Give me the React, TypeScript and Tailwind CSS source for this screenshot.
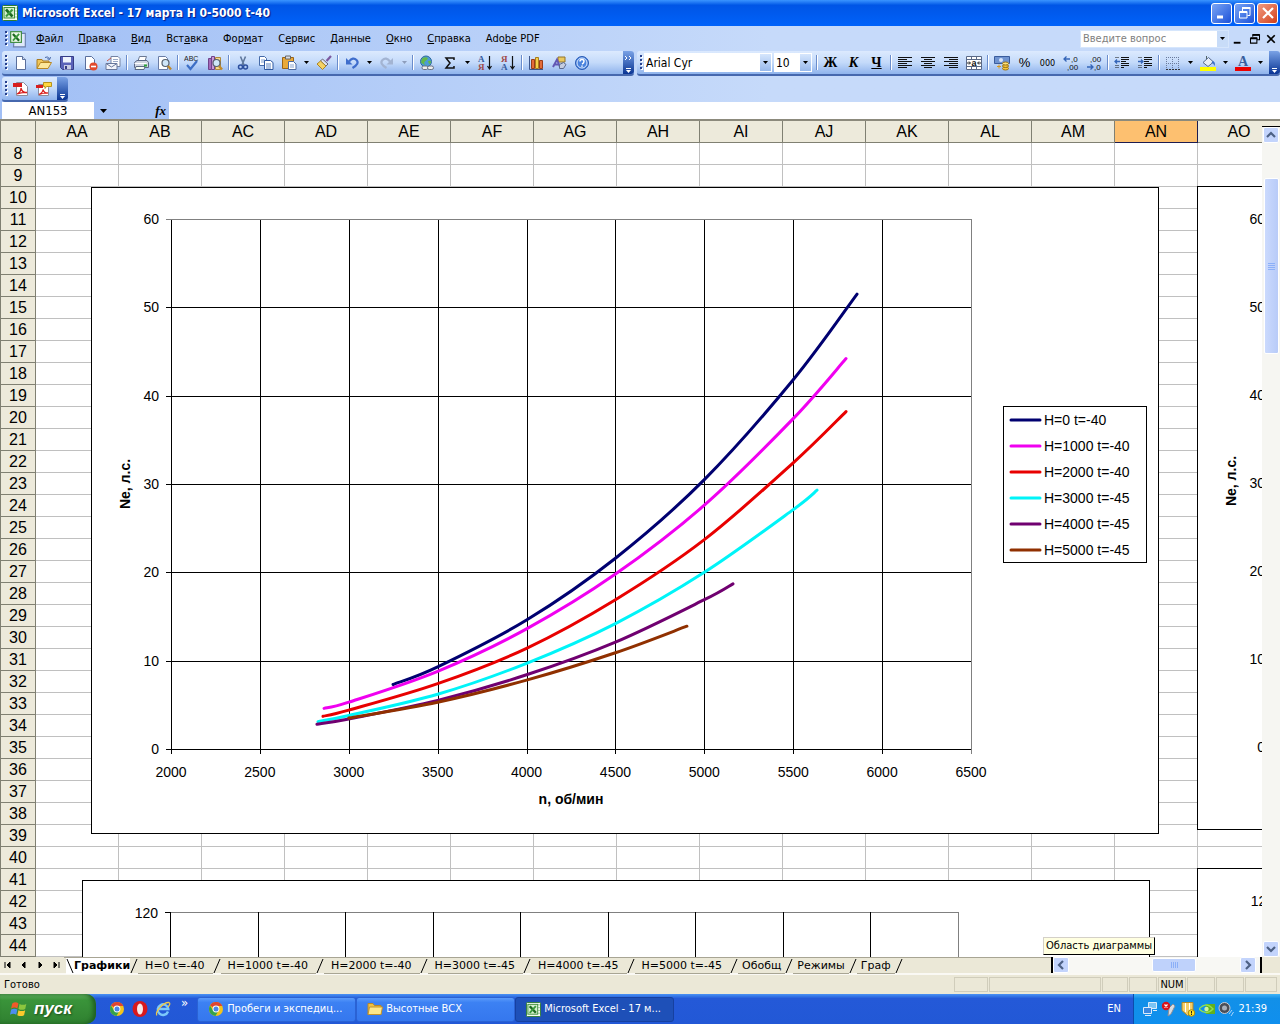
import type { ReactNode } from "react";
import clsx from "clsx";

type Point = [number, number];

interface Series {
  label: string;
  color: string;
  points: Point[];
}

const SERIES: Series[] = [
  {
    label: "H=0 t=-40",
    color: "#000070",
    points: [[3249, 7.3], [3500, 9.3], [4000, 14.6], [4500, 21.6], [5000, 30.5], [5500, 41.8], [5859, 51.5]],
  },
  {
    label: "H=1000 t=-40",
    color: "#f000f0",
    points: [[2861, 4.6], [3000, 5.3], [3500, 8.8], [4000, 13.6], [4500, 19.8], [5000, 27.6], [5500, 37.4], [5797, 44.2]],
  },
  {
    label: "H=2000 t=-40",
    color: "#e80000",
    points: [[2855, 3.7], [3000, 4.4], [3500, 7.4], [4000, 11.4], [4500, 16.9], [5000, 23.7], [5500, 32.4], [5797, 38.2]],
  },
  {
    label: "H=3000 t=-45",
    color: "#00f4f8",
    points: [[2827, 3.1], [3000, 3.8], [3500, 6.2], [4000, 9.7], [4500, 14.2], [5000, 20], [5500, 27.1], [5634, 29.3]],
  },
  {
    label: "H=4000 t=-45",
    color: "#700070",
    points: [[2821, 2.8], [3000, 3.4], [3500, 5.5], [4000, 8.4], [4500, 12.1], [5000, 16.9], [5161, 18.7]],
  },
  {
    label: "H=5000 t=-45",
    color: "#903000",
    points: [[3000, 3.5], [3500, 5.3], [4000, 7.8], [4500, 10.9], [4902, 13.9]],
  },
];

const COLUMNS = ["AA", "AB", "AC", "AD", "AE", "AF", "AG", "AH", "AI", "AJ", "AK", "AL", "AM", "AN", "AO"];
const ROWS = Array.from({ length: 37 }, (_, i) => i + 8);

const MENU: [string, string, string][] = [
  ["", "Ф", "айл"],
  ["", "П", "равка"],
  ["", "В", "ид"],
  ["Вст", "а", "вка"],
  ["Фор", "м", "ат"],
  ["С", "е", "рвис"],
  ["", "Д", "анные"],
  ["", "О", "кно"],
  ["", "С", "правка"],
  ["Ado", "b", "e PDF"],
];

const SHEETS = ["H=0 t=-40", "H=1000 t=-40", "H=2000 t=-40", "H=3000 t=-45", "H=4000 t=-45", "H=5000 t=-45", "Обобщ", "Режимы", "Граф"];

/* ---------- icons ---------- */

function Svg({ children, size = 16 }: { children: ReactNode; size?: number }) {
  return (
    <svg width={size} height={size} viewBox="0 0 16 16" fill="none" className="shrink-0" aria-hidden="true">
      {children}
    </svg>
  );
}

function ExcelIcon({ size = 16 }: { size?: number }) {
  return (
    <Svg size={size}>
      <rect x="0.5" y="0.5" width="15" height="15" rx="1" fill="#f4fbf0" stroke="#2f7d32" />
      <path d="M10 3h5M10 6h5M10 9h5M10 12h5" stroke="#9cc79a" />
      <rect x="2" y="2.5" width="10.500" height="10.500" fill="#d5efce" stroke="#3e8f3c" />
      <path d="M4 4.500l6.500 7" stroke="#1d6b22" strokeWidth="2.600" />
      <path d="M10.500 4.500l-6.500 7" stroke="#3c9a3e" strokeWidth="2" />
    </Svg>
  );
}

function ChromeIcon() {
  return (
    <Svg>
      <circle cx="8" cy="8" r="7" fill="#f4c41c" />
      <path d="M8 8L2 4.400A7 7 0 0 1 14.300 5H8z" fill="#df4430" />
      <path d="M2 4.400A7 7 0 0 0 7.500 15L10.500 9.500 5 9.500z" fill="#36a24c" />
      <circle cx="8" cy="8" r="3.400" fill="#fff" />
      <circle cx="8" cy="8" r="2.500" fill="#4a86e8" />
    </Svg>
  );
}

const page = <path d="M3.500 1.500h6l3 3v10h-9z" fill="#fff" stroke="#5a6f9c" />;
const lens = (
  <>
    <circle cx="9.500" cy="8" r="3.500" fill="#cfe6f8" stroke="#55606e" strokeWidth="1.200" />
    <path d="M12 11l3 3.500" stroke="#c08a2c" strokeWidth="2.400" />
  </>
);

const ICONS: Record<string, ReactNode> = {
  new: (
    <>
      {page}
      <path d="M9.500 1.500v3h3" fill="#c9d7ef" stroke="#5a6f9c" />
    </>
  ),
  open: (
    <>
      <path d="M1 13.500V4.500h5l1 1.500h6v3" fill="#f1c75b" stroke="#a87a20" />
      <path d="M1 13.500L4.500 7.500h11L12 13.500z" fill="#fde79b" stroke="#b88724" />
      <path d="M9 2.500q3-2 4.500 1.500M14.500 2l-.8 2.500-2.500-.8" stroke="#4b6aa8" />
    </>
  ),
  save: (
    <>
      <path d="M1.500 1.500h13v13h-11l-2-2z" fill="#5a62b8" stroke="#363c86" />
      <path d="M4 2h8v5.500H4z" fill="#eef3fd" />
      <path d="M5 10h7v4.500H5z" fill="#c8cce4" />
      <path d="M6 11h2v3H6z" fill="#363c86" />
    </>
  ),
  permission: (
    <>
      {page}
      <circle cx="11.500" cy="11.500" r="4" fill="#e2492c" />
      <path d="M9 11.500h5" stroke="#fff" strokeWidth="1.600" />
    </>
  ),
  mail: (
    <>
      <path d="M6 1.500h7l2 2v8H6z" fill="#fff" stroke="#7583a3" />
      <path d="M8 4.500h5M8 6.500h5" stroke="#9aa9c8" />
      <path d="M1 8.500h11v6H1z" fill="#f2f4fa" stroke="#68789c" />
      <path d="M1 8.500l5.500 3.500L12 8.500" stroke="#68789c" />
      <path d="M2 6l4-3" stroke="#cc5544" />
    </>
  ),
  print: (
    <>
      <path d="M5 6l1.500-4.500h7L12 6z" fill="#fff" stroke="#6c7a94" />
      <path d="M1.500 7.500L4 5.500h10l1.500 2v5h-14z" fill="#cfd6e2" stroke="#5c6984" />
      <path d="M1.500 8.500h12" stroke="#fff" />
      <path d="M3 11.500h9l-1 3H2z" fill="#f6fff4" stroke="#5c6984" />
      <path d="M11 10.500h3" stroke="#2ca53a" strokeWidth="2" />
    </>
  ),
  preview: (
    <>
      <path d="M2.500 1.500h7l2 2v11h-9z" fill="#fff" stroke="#6a7da6" />
      {lens}
    </>
  ),
  spell: (
    <>
      <text x="0" y="6" fontSize="7" fill="#222" fontFamily="Liberation Sans, sans-serif">ABC</text>
      <path d="M3 10l3.500 4L13 6" stroke="#3d6fc6" strokeWidth="2.200" />
    </>
  ),
  research: (
    <>
      <path d="M1.500 3.500h3v11h-3z" fill="#a46ab8" stroke="#70428a" />
      <path d="M4.500 1.500h3v13h-3z" fill="#c99ad8" stroke="#70428a" />
      <path d="M8.500 2.500h5v12h-5z" fill="#f3d890" stroke="#b08a3c" />
      {lens}
    </>
  ),
  cut: (
    <>
      <path d="M5.500 1.500L9 10M10.500 1.500L7 10" stroke="#60789c" strokeWidth="1.600" />
      <circle cx="5.500" cy="12" r="2" stroke="#2c4f9e" strokeWidth="1.500" />
      <circle cx="10.500" cy="12" r="2" stroke="#2c4f9e" strokeWidth="1.500" />
    </>
  ),
  copy: (
    <>
      <path d="M1.500 1.500h5l2 2v7h-7z" fill="#fff" stroke="#456aa8" />
      <path d="M3 5h4M3 7h4" stroke="#7f9fd0" />
      <path d="M6.500 5.500h6l2.500 2v7H6.500z" fill="#fff" stroke="#2f58a0" />
      <path d="M8 9h5M8 11h5M8 13h5" stroke="#5f86c4" />
    </>
  ),
  paste: (
    <>
      <path d="M1.500 2.500h11v11h-11z" fill="#e9a93a" stroke="#9a6518" />
      <path d="M4.500 1h5v3h-5z" fill="#d9dce4" stroke="#666" />
      <path d="M7.500 6.500h5l2.500 2.500v5.500H7.500z" fill="#fff" stroke="#4c6aa0" />
      <path d="M9 10h4M9 12h4" stroke="#8aa5d0" />
    </>
  ),
  painter: (
    <>
      <path d="M15 1l-4.500 5" stroke="#7c5aa0" strokeWidth="2.200" />
      <path d="M6.500 4l5.500 5-2 2L4.500 6z" fill="#dfe3ee" stroke="#667" />
      <path d="M4.500 6l5.500 5-3.500 3.500L1 9z" fill="#f5d263" stroke="#ab8426" />
    </>
  ),
  undo: (
    <>
      <path d="M5 6.500Q9 1.500 12.500 5T8.500 13" stroke="#3e6dcc" strokeWidth="2.200" />
      <path d="M2 3v6.500h6.500z" fill="#3e6dcc" />
    </>
  ),
  redo: (
    <>
      <path d="M11 6.500Q7 1.500 3.500 5T7.500 13" stroke="#a3b4d2" strokeWidth="2.200" />
      <path d="M14 3v6.500H7.500z" fill="#a3b4d2" />
    </>
  ),
  link: (
    <>
      <circle cx="7" cy="6.500" r="5.500" fill="#4c9bd8" stroke="#2f6a9c" />
      <path d="M3 3.500q3-2 5-1t-1 3-1 4-4-2z" fill="#64b848" />
      <path d="M9 6q3-1 3 1t-2 2z" fill="#64b848" />
      <rect x="3" y="11" width="6" height="3.500" rx="1.700" fill="#eee" stroke="#6a7284" />
      <rect x="8.500" y="11" width="6" height="3.500" rx="1.700" fill="#eee" stroke="#6a7284" />
    </>
  ),
  sum: <path d="M12 5V3H4l4 5-4 5h8v-2" stroke="#111" strokeWidth="1.500" />,
  chart: (
    <>
      <path d="M1.500 1v13.500H15" stroke="#3d568c" />
      <path d="M3.500 4.500h3v9h-3z" fill="#e36c3a" stroke="#9a3c18" />
      <path d="M7.500 2.500h3v11h-3z" fill="#f6cf4b" stroke="#a97d1b" />
      <path d="M11.500 5.500h3v8h-3z" fill="#e36c3a" stroke="#9a3c18" />
    </>
  ),
  drawing: (
    <>
      <path d="M7 2h7v5H7z" fill="#e9c860" stroke="#93752a" />
      <path d="M2 12L6 4.500 9 12M3.500 9.500h4" stroke="#6257b4" strokeWidth="2" />
      <path d="M8.500 9.500l4-2 2.500 2-2.500 4h-4z" fill="#c5cde0" stroke="#5b6a8e" />
    </>
  ),
  help: (
    <>
      <circle cx="8" cy="8" r="6.500" fill="#4a83de" stroke="#2a5bb4" />
      <circle cx="8" cy="8" r="5" stroke="#dbe8fc" />
      <path d="M6 6.500q0-2 2-2t2 1.800-2 2.700M8 10.500v1.300" stroke="#fff" strokeWidth="1.500" />
    </>
  ),
  left: <path d="M1 2.500h14M1 4.500h9M1 6.500h14M1 8.500h9M1 10.500h14M1 12.500h9" stroke="#111" />,
  center: <path d="M1 2.500h14M4 4.500h8M1 6.500h14M4 8.500h8M1 10.500h14M4 12.500h8" stroke="#111" />,
  right: <path d="M1 2.500h14M6 4.500h9M1 6.500h14M6 8.500h9M1 10.500h14M6 12.500h9" stroke="#111" />,
  merge: (
    <>
      <path d="M.5 1.500h15v13H.5zM.5 4.500h15M.5 11.500h15M5.500 1.500v3M10.500 1.500v3M5.500 11.500v3M10.500 11.500v3" fill="#fff" stroke="#5b6a88" />
      <text x="5.500" y="10.500" fontSize="9" fontWeight="bold" fill="#111" fontFamily="Liberation Sans, sans-serif">a</text>
      <path d="M1 8h3M12 8h3M3 6.500L4.500 8 3 9.500M13 6.500L11.500 8l1.500 1.500" stroke="#222" />
    </>
  ),
  currency: (
    <>
      <path d="M.5 1.500h15v7H.5z" fill="#6f93d0" stroke="#3a5c9c" />
      <circle cx="7" cy="5" r="2" fill="#d6e4fa" />
      <ellipse cx="11.500" cy="13.500" rx="3" ry="1.500" fill="#f4c53c" stroke="#9b7414" />
      <ellipse cx="11.500" cy="11" rx="3" ry="1.500" fill="#f4c53c" stroke="#9b7414" />
      <ellipse cx="11.500" cy="8.500" rx="3" ry="1.500" fill="#fbe07c" stroke="#9b7414" />
      <path d="M3 11.500h4M5 9.500v4" stroke="#d89a20" />
    </>
  ),
  incDecimal: (
    <>
      <text x="8" y="7" fontSize="8" fill="#111" fontFamily="Liberation Sans, sans-serif">,0</text>
      <text x="4" y="15" fontSize="8" fill="#111" fontFamily="Liberation Sans, sans-serif">,00</text>
      <path d="M1 4h6M3.500 1.500L1 4l2.500 2.500" stroke="#3565b8" strokeWidth="1.300" />
    </>
  ),
  decDecimal: (
    <>
      <text x="4" y="7" fontSize="8" fill="#111" fontFamily="Liberation Sans, sans-serif">,00</text>
      <text x="8" y="15" fontSize="8" fill="#111" fontFamily="Liberation Sans, sans-serif">,0</text>
      <path d="M1 12h6M4.500 9.500L7 12l-2.500 2.500" stroke="#3565b8" strokeWidth="1.300" />
    </>
  ),
  outdent: (
    <>
      <path d="M7 2.500h8M7 4.500h8M7 6.500h5M7 8.500h8M7 10.500h8M7 12.500h3" stroke="#111" />
      <path d="M1.500 2.500h4M1.500 10.500h4M1.500 12.500h4" stroke="#111" strokeDasharray="1 1" />
      <path d="M1 6.500h5M3 4.500l-2 2 2 2" stroke="#3565b8" strokeWidth="1.300" />
    </>
  ),
  indent: (
    <>
      <path d="M7 2.500h8M7 4.500h8M7 6.500h5M7 8.500h8M7 10.500h8M7 12.500h3" stroke="#111" />
      <path d="M1.500 2.500h4M1.500 10.500h4M1.500 12.500h4" stroke="#111" strokeDasharray="1 1" />
      <path d="M1 6.500h5M4 4.500l2 2-2 2" stroke="#3565b8" strokeWidth="1.300" />
    </>
  ),
  borders: (
    <>
      <path d="M1.500 2v12M7.500 2v12M13.500 2v12M1 2.500h13M1 8.500h13" stroke="#6b7b9c" strokeDasharray="1 1" />
      <path d="M1 14.500h14" stroke="#333" strokeDasharray="2 1" />
    </>
  ),
  fill: (
    <>
      <path d="M6.500 1v5" stroke="#566" />
      <path d="M3 7.500L8.500 2.500l5 4.500-5.500 4.500z" fill="#e6edf8" stroke="#566a90" />
      <path d="M12.500 6q3.500 1 2 5-1-3-3-3z" fill="#3a6fc8" />
      <path d="M0 12h16v4H0z" fill="#ffff00" />
    </>
  ),
  fontColor: (
    <>
      <text x="3" y="11" fontSize="14" fontWeight="bold" fill="#3a5f9e" fontFamily="Liberation Serif, serif">A</text>
      <path d="M0 12h16v4H0z" fill="#ec0000" />
    </>
  ),
  pdf: (
    <>
      <path d="M3.500 1.500h7l4 4v9h-11z" fill="#fff" stroke="#8c8c9c" />
      <path d="M0 2h9v4H0z" fill="#d81e1e" />
      <path d="M4 13q4-2 4-6 1 5 6 4.500-5-.5-10 1.500z" stroke="#d81e1e" strokeWidth="1.300" />
    </>
  ),
  pdfMail: (
    <>
      <path d="M2.500 3.500h7l3 3v8h-10z" fill="#fff" stroke="#8c8c9c" />
      <path d="M0 4h7v3H0z" fill="#d81e1e" />
      <path d="M3 13.500q4-2 4-5 1 4 5 3.500-5 0-9 1.500z" stroke="#d81e1e" strokeWidth="1.200" />
      <path d="M7.500 1.500h8v4h-5l-1.500 2v-2H7.500z" fill="#ffd740" stroke="#b8941c" />
    </>
  ),
};

function SortIcon({ top, bottom, flip }: { top: string; bottom: string; flip?: boolean }) {
  return (
    <Svg>
      <text x="1" y="7" fontSize="9" fontWeight="bold" fill={flip ? "#a04848" : "#345a9c"} fontFamily="Liberation Serif, serif">{top}</text>
      <text x="1" y="15" fontSize="9" fontWeight="bold" fill={flip ? "#345a9c" : "#a04848"} fontFamily="Liberation Serif, serif">{bottom}</text>
      <path d="M12.500 1v12M10.500 11l2 3 2-3" stroke="#111" strokeWidth="1.200" />
    </Svg>
  );
}

/* ---------- toolbar parts ---------- */

function Tool({ name, label, children }: { name?: string; label: string; children?: ReactNode }) {
  return (
    <button type="button" aria-label={label} className="flex h-[22px] w-[23px] shrink-0 items-center justify-center">
      {name ? <Svg>{ICONS[name]}</Svg> : children}
    </button>
  );
}

function Sep() {
  return <span className="mx-[2px] h-[15px] w-px shrink-0 bg-[#6a8ccb] shadow-[1px_0_0_#fff]" />;
}

function Triangle({ muted }: { muted?: boolean }) {
  return (
    <svg width="5" height="3" viewBox="0 0 5 3" className="shrink-0" aria-hidden="true">
      <path d="M0 0h5L2.500 3z" fill={muted ? "#8d9dbb" : "#000"} />
    </svg>
  );
}

function More({ label, muted }: { label: string; muted?: boolean }) {
  return (
    <button type="button" aria-label={label} className="flex h-[22px] w-3 shrink-0 items-center justify-center">
      <Triangle muted={muted} />
    </button>
  );
}

function Grip() {
  return (
    <svg width="3" height="15" viewBox="0 0 3 15" className="ml-[3px] mr-px shrink-0" aria-hidden="true">
      {[0, 4, 8, 12].map((y) => (
        <g key={y}>
          <rect x="1" y={y + 1} width="2" height="2" fill="#fff" />
          <rect x="0" y={y} width="2" height="2" fill="#27418e" />
        </g>
      ))}
    </svg>
  );
}

function BarEnd({ double }: { double?: boolean }) {
  return (
    <button
      type="button"
      aria-label="Параметры панелей инструментов"
      className="ml-auto flex w-[11px] shrink-0 flex-col items-center justify-end self-stretch rounded-r-[3px] bg-linear-to-b from-[#7aa2e6] to-[#0a3494]"
    >
      <svg width="9" height="20" viewBox="0 0 9 20" fill="none" aria-hidden="true">
        {double && <path d="M1 2l2 2-2 2M5 2l2 2-2 2" stroke="#fff" />}
        <path d="M2 14.500h5" stroke="#fff" />
        <path d="M2 16h5l-2.500 3z" fill="#fff" />
      </svg>
    </button>
  );
}

function Select({ label, value, className }: { label: string; value: string; className: string }) {
  return (
    <label className={clsx("relative flex h-[19px] shrink-0 items-center border border-white bg-white", className)}>
      <select
        aria-label={label}
        className="h-full w-full appearance-none bg-transparent pl-px text-[12px] leading-4 outline-none"
        defaultValue={value}
      >
        <option>{value}</option>
      </select>
      <span className="pointer-events-none absolute inset-y-0 right-0 flex w-[11px] items-center justify-center bg-linear-to-b from-[#d6e6fc] to-[#98b9ec]">
        <Triangle />
      </span>
    </label>
  );
}

const BAR = "flex h-[25px] items-center rounded-[3px] border-b-2 border-[#4668ae] bg-linear-to-b from-[#dceafe] via-[#c4dafa] to-[#8fb3ec]";

/* ---------- window chrome ---------- */

function TitleBar() {
  const box = "flex size-[21px] items-center justify-center rounded-[3px] border border-white bg-linear-to-br";
  return (
    <header className="flex h-[26px] shrink-0 items-center gap-1 bg-linear-to-b from-[#3a94ff] via-[#0055e6] via-20% to-[#0062fa] pl-[2px] pr-[2px]">
      <ExcelIcon />
      <h1 className="font-['DejaVu_Sans_Condensed','DejaVu_Sans',sans-serif] text-[12px] font-bold leading-4 text-white [text-shadow:1px_1px_1px_#0a1883]">
        Microsoft Excel - 17 марта H 0-5000 t-40
      </h1>
      <div className="ml-auto flex gap-[2px]">
        <button type="button" aria-label="Свернуть" className={clsx(box, "from-[#7ba4f4] to-[#1c4fd8]")}>
          <Svg>
            <path d="M3 12h6" stroke="#fff" strokeWidth="3" />
          </Svg>
        </button>
        <button type="button" aria-label="Восстановить" className={clsx(box, "from-[#7ba4f4] to-[#1c4fd8]")}>
          <Svg>
            <path d="M5.500 6V3.500h7.500v7h-2.500" stroke="#fff" />
            <path d="M5 3h8.500" stroke="#fff" strokeWidth="2" />
            <path d="M2.500 6.500h7.500v6.500H2.500zM2.500 7.500h7.500" stroke="#fff" />
          </Svg>
        </button>
        <button type="button" aria-label="Закрыть" className={clsx(box, "from-[#f09a80] to-[#d23c10]")}>
          <Svg>
            <path d="M3 3l10 10M13 3L3 13" stroke="#fff" strokeWidth="2.200" />
          </Svg>
        </button>
      </div>
    </header>
  );
}

function MenuBar() {
  return (
    <nav className="flex h-[25px] items-center pr-[3px]">
      <span className="ml-[2px] flex items-center">
        <Grip />
        <Svg size={18}>
          <path d="M5 3h9.500v12H4z" fill="#dfe9fb" stroke="#6a7fae" />
          <rect x="1.500" y="1.500" width="9.500" height="9.500" fill="#eef8ea" stroke="#3b8a3c" />
          <path d="M3.500 3.500l5.500 6" stroke="#1d6b22" strokeWidth="2" />
          <path d="M9 3.500l-5.500 6" stroke="#3c9a3e" strokeWidth="1.600" />
        </Svg>
      </span>
      <ul className="ml-[9px] flex gap-[15px] text-[11px] leading-4">
        {MENU.map(([before, key, after]) => (
          <li key={before + key + after}>
            <button type="button">
              {before}
              <u>{key}</u>
              {after}
            </button>
          </li>
        ))}
      </ul>
      <div className="ml-auto flex items-center gap-1">
        <div className="flex h-[18px] w-[149px] items-center border border-[#d6e6fc] bg-white">
          <input
            aria-label="Введите вопрос"
            placeholder="Введите вопрос"
            className="w-0 flex-1 bg-transparent pl-[2px] text-[11px] leading-4 outline-none placeholder:text-[#808080]"
          />
          <span className="flex h-full w-[11px] items-center justify-center bg-[#c8dcf8]">
            <Triangle />
          </span>
        </div>
        <button type="button" aria-label="Свернуть книгу">
          <Svg size={12}>
            <path d="M1 13h9" stroke="#000" strokeWidth="2.500" />
          </Svg>
        </button>
        <button type="button" aria-label="Восстановить книгу">
          <Svg size={12}>
            <path d="M5 5V2.500h9V9h-3M2 7h8.500v6.500H2z" stroke="#000" strokeWidth="1.400" />
            <path d="M5 2.500h9M2 7h9" stroke="#000" strokeWidth="2.400" />
          </Svg>
        </button>
        <button type="button" aria-label="Закрыть книгу">
          <Svg size={12}>
            <path d="M3 3l10 10M13 3L3 13" stroke="#000" strokeWidth="2.200" />
          </Svg>
        </button>
      </div>
    </nav>
  );
}

function Toolbars() {
  return (
    <div className="flex h-[26px] gap-[3px] pl-[2px]">
      <div className={clsx(BAR, "w-[632px] shrink-0")}>
        <Grip />
        <Tool name="new" label="Создать" />
        <Tool name="open" label="Открыть" />
        <Tool name="save" label="Сохранить" />
        <Tool name="permission" label="Разрешения" />
        <Tool name="mail" label="Сообщение" />
        <Sep />
        <Tool name="print" label="Печать" />
        <Tool name="preview" label="Предварительный просмотр" />
        <Sep />
        <Tool name="spell" label="Орфография" />
        <Tool name="research" label="Справочные материалы" />
        <Sep />
        <Tool name="cut" label="Вырезать" />
        <Tool name="copy" label="Копировать" />
        <Tool name="paste" label="Вставить" />
        <More label="Параметры вставки" />
        <Tool name="painter" label="Формат по образцу" />
        <Sep />
        <Tool name="undo" label="Отменить" />
        <More label="Список отмены" />
        <Tool name="redo" label="Вернуть" />
        <More label="Список возврата" muted />
        <Sep />
        <Tool name="link" label="Гиперссылка" />
        <Tool name="sum" label="Автосумма" />
        <More label="Функции" />
        <Tool label="Сортировка по возрастанию">
          <SortIcon top="А" bottom="Я" />
        </Tool>
        <Tool label="Сортировка по убыванию">
          <SortIcon top="Я" bottom="А" flip />
        </Tool>
        <Sep />
        <Tool name="chart" label="Мастер диаграмм" />
        <Tool name="drawing" label="Рисование" />
        <Tool name="help" label="Справка" />
        <BarEnd double />
      </div>
      <div className={clsx(BAR, "min-w-0 flex-1")}>
        <Grip />
        <Select label="Шрифт" value="Arial Cyr" className="w-[128px]" />
        <Select label="Размер" value="10" className="mx-[2px] w-[38px]" />
        <Sep />
        <Tool label="Полужирный">
          <b className="font-['Liberation_Serif',serif] text-[14px] leading-4">Ж</b>
        </Tool>
        <Tool label="Курсив">
          <i className="font-['Liberation_Serif',serif] text-[14px] font-bold leading-4">К</i>
        </Tool>
        <Tool label="Подчеркнутый">
          <u className="font-['Liberation_Serif',serif] text-[14px] font-bold leading-4">Ч</u>
        </Tool>
        <Sep />
        <Tool name="left" label="По левому краю" />
        <Tool name="center" label="По центру" />
        <Tool name="right" label="По правому краю" />
        <Tool name="merge" label="Объединить ячейки" />
        <Sep />
        <Tool name="currency" label="Денежный формат" />
        <Tool label="Процентный формат">
          <span className="font-['Liberation_Sans',sans-serif] text-[13px] leading-4">%</span>
        </Tool>
        <Tool label="Формат с разделителями">
          <span className="font-['DejaVu_Sans_Condensed',sans-serif] text-[9px] leading-4">000</span>
        </Tool>
        <Tool name="incDecimal" label="Увеличить разрядность" />
        <Tool name="decDecimal" label="Уменьшить разрядность" />
        <Sep />
        <Tool name="outdent" label="Уменьшить отступ" />
        <Tool name="indent" label="Увеличить отступ" />
        <Sep />
        <Tool name="borders" label="Границы" />
        <More label="Виды границ" />
        <Tool name="fill" label="Цвет заливки" />
        <More label="Цвета заливки" />
        <Tool name="fontColor" label="Цвет шрифта" />
        <More label="Цвета шрифта" />
        <BarEnd />
      </div>
    </div>
  );
}

function FormulaBar() {
  return (
    <div className="flex h-[17px] pl-[2px]">
      <input
        aria-label="Имя"
        defaultValue="AN153"
        className="w-[92px] bg-white text-center text-[13px] leading-4 outline-none"
      />
      <button type="button" aria-label="Список имен" className="flex w-[18px] items-center justify-center">
        <svg width="7" height="4" viewBox="0 0 7 4" aria-hidden="true">
          <path d="M0 0h7L3.500 4z" fill="#000" />
        </svg>
      </button>
      <button
        type="button"
        aria-label="Вставка функции"
        className="w-[57px] pr-[3px] text-right font-['Liberation_Serif',serif] text-[13px] font-bold italic leading-4"
      >
        fx
      </button>
      <input aria-label="Строка формул" className="min-w-0 flex-1 bg-white px-1 text-[13px] leading-4 outline-none" />
    </div>
  );
}

/* ---------- charts ---------- */

const px = (rpm: number) => 80 + ((rpm - 2000) * 800) / 4500;
const py = (power: number) => 562 - (power * 530) / 60;
const snap = (n: number) => Math.round(n) + 0.5;

// Catmull-Rom through the measured points, the same smoothing as an XY scatter
function smoothPath(points: Point[]) {
  const p = points.map(([x, y]) => [px(x), py(y)]);
  let d = `M${p[0][0]} ${p[0][1]}`;
  for (let i = 0; i < p.length - 1; i++) {
    const a = p[i - 1] ?? p[i];
    const b = p[i];
    const c = p[i + 1];
    const e = p[i + 2] ?? c;
    d += `C${b[0] + (c[0] - a[0]) / 6} ${b[1] + (c[1] - a[1]) / 6} ${c[0] - (e[0] - b[0]) / 6} ${c[1] - (e[1] - b[1]) / 6} ${c[0]} ${c[1]}`;
  }
  return d;
}

const CHART_TEXT = "fill-black font-['Liberation_Sans',sans-serif] text-[14px]";

function PowerChart() {
  const xs = [2000, 2500, 3000, 3500, 4000, 4500, 5000, 5500, 6000, 6500];
  const ys = [0, 10, 20, 30, 40, 50, 60];
  return (
    <svg width="1068" height="647" className="absolute left-[91px] top-[66px] bg-white" role="img" aria-label="Ne от n">
      <rect x="0.5" y="0.5" width="1067" height="646" fill="none" stroke="#000" />
      <g shapeRendering="crispEdges">
        {xs.map((x) => (
          <line key={x} x1={snap(px(x))} x2={snap(px(x))} y1={32} y2={567} stroke={x === 6500 ? "#808080" : "#000"} />
        ))}
        {ys.map((y) => (
          <line key={y} x1={75} x2={880} y1={snap(py(y))} y2={snap(py(y))} stroke={y === 60 ? "#808080" : "#000"} />
        ))}
      </g>
      {SERIES.map((s) => (
        <path key={s.label} d={smoothPath(s.points)} fill="none" stroke={s.color} strokeWidth="3" strokeLinecap="round" />
      ))}
      <g className={CHART_TEXT} textAnchor="middle">
        {xs.map((x) => (
          <text key={x} x={px(x)} y={590}>{x}</text>
        ))}
        <text x={480} y={617} fontWeight="bold">n, об/мин</text>
        <text transform="translate(39 297) rotate(-90)" fontWeight="bold">Ne, л.с.</text>
      </g>
      <g className={CHART_TEXT} textAnchor="end">
        {ys.map((y) => (
          <text key={y} x={68} y={py(y) + 5}>{y}</text>
        ))}
      </g>
      <rect x="912.5" y="219.5" width="143" height="156" fill="#fff" stroke="#000" />
      <g className={CHART_TEXT}>
        {SERIES.map((s, i) => (
          <g key={s.label}>
            <path d={`M920 ${233 + i * 26}h29`} stroke={s.color} strokeWidth="3" strokeLinecap="round" />
            <text x={953} y={238 + i * 26}>{s.label}</text>
          </g>
        ))}
      </g>
    </svg>
  );
}

function LowerChart() {
  return (
    <svg width="1068" height="647" className="absolute left-[82px] top-[759px] bg-white" role="img" aria-label="Диаграмма">
      <rect x="0.5" y="0.5" width="1067" height="646" fill="none" stroke="#000" />
      <text x={76} y={38} textAnchor="end" className={CHART_TEXT}>120</text>
      <g shapeRendering="crispEdges">
        <path d="M83 32.500h5" stroke="#000" />
        <path d="M88 32.500h789" stroke="#808080" />
        {[88, 176, 263, 351, 438, 526, 613, 701, 788].map((x) => (
          <path key={x} d={`M${x + 0.5} 32v580`} stroke="#000" />
        ))}
        <path d="M876.500 32v580" stroke="#808080" />
      </g>
    </svg>
  );
}

function SideCharts() {
  return (
    <>
      <svg width="1068" height="644" className="absolute left-[1197px] top-[65px] bg-white" role="img" aria-label="Ne от n, продолжение">
        <rect x="0.5" y="0.5" width="1067" height="643" fill="none" stroke="#000" />
        <g className={CHART_TEXT} textAnchor="end">
          {[60, 50, 40, 30, 20, 10, 0].map((y, i) => (
            <text key={y} x={68} y={38 + i * 88}>{y}</text>
          ))}
        </g>
        <text transform="translate(39 295) rotate(-90)" textAnchor="middle" fontWeight="bold" className={CHART_TEXT}>Ne, л.с.</text>
      </svg>
      <svg width="1068" height="644" className="absolute left-[1197px] top-[747px] bg-white" role="img" aria-label="Диаграмма, продолжение">
        <rect x="0.5" y="0.5" width="1067" height="643" fill="none" stroke="#000" />
        <text x={77} y={38} textAnchor="end" className={CHART_TEXT}>120</text>
      </svg>
    </>
  );
}

/* ---------- sheet ---------- */

function ScrollButton({ label, d }: { label: string; d: string }) {
  return (
    <button
      type="button"
      aria-label={label}
      className="flex size-4 shrink-0 items-center justify-center rounded-[2px] border border-white bg-[#c3d4fc]"
    >
      <svg width="10" height="10" viewBox="0 0 10 10" fill="none" aria-hidden="true">
        <path d={d} stroke="#4d6185" strokeWidth="2.200" />
      </svg>
    </button>
  );
}

function Grid() {
  return (
    <div className="relative min-w-0 flex-1 overflow-hidden bg-white">
      <table className="w-[1281px] table-fixed border-separate border-spacing-0 font-['Liberation_Sans',sans-serif] text-[16px] leading-5">
        <thead>
          <tr className="h-[22px]">
            <th aria-label="Выделить все" className="w-[36px] border-b border-l border-r border-[#808072] bg-[#edeadb] p-0" />
            {COLUMNS.map((c) => (
              <th
                key={c}
                scope="col"
                className={clsx(
                  "h-[22px] border-b border-r p-0 font-normal",
                  c === "AN" ? "border-[#1c1c50] bg-[#fdc070]" : "border-[#808072] bg-[#edeadb]",
                )}
              >
                {c}
              </th>
            ))}
          </tr>
        </thead>
        <tbody>
          {ROWS.map((r) => (
            <tr key={r} className="h-[22px]">
              <th scope="row" className="h-[22px] border-b border-l border-r border-[#808072] bg-[#edeadb] p-0 font-normal">
                {r}
              </th>
              {COLUMNS.map((c) => (
                <td key={c} className="border-b border-r border-[#c0c0c0] p-0" />
              ))}
            </tr>
          ))}
        </tbody>
      </table>
      <PowerChart />
      <LowerChart />
      <SideCharts />
      <div
        role="tooltip"
        className="absolute left-[1043px] top-[816px] border border-b-black border-l-[#d4d0c8] border-r-black border-t-[#d4d0c8] bg-[#ffffe1] px-[2px] text-[11px] leading-4"
      >
        Область диаграммы
      </div>
    </div>
  );
}

function VerticalScroll() {
  return (
    <div className="flex w-[18px] shrink-0 flex-col items-center bg-[#f6f6f2]">
      <div className="h-[6px] w-full border-b border-black bg-[#edeadb]" />
      <ScrollButton label="Вверх" d="M1 7l4-4 4 4" />
      <div className="flex w-full flex-1 flex-col items-center pt-[35px]">
        <div className="flex h-[176px] w-[15px] flex-col items-center justify-center gap-px rounded-[2px] border border-white bg-linear-to-r from-[#cbdafd] to-[#b8cbf8]">
          {[0, 1, 2, 3].map((i) => (
            <span key={i} className="h-px w-[7px] bg-[#8cb0f8]" />
          ))}
        </div>
      </div>
      <ScrollButton label="Вниз" d="M1 3l4 4 4-4" />
    </div>
  );
}

function Slash({ back }: { back?: boolean }) {
  return (
    <svg width="8" height="16" viewBox="0 0 8 16" fill="none" className="shrink-0" aria-hidden="true">
      <path d={back ? "M1 1l6 14" : "M7 1L1 15"} stroke="#000" />
    </svg>
  );
}

function SheetTabs() {
  const arrows: [string, string][] = [
    ["К первому листу", "M3 3v6M8 3L5 6l3 3z"],
    ["К предыдущему листу", "M7 3L4 6l3 3z"],
    ["К следующему листу", "M5 3l3 3-3 3z"],
    ["К последнему листу", "M9 3v6M4 3l3 3-3 3z"],
  ];
  return (
    <div className="flex h-[18px] shrink-0 items-start border-b-2 border-[#faf9f4] bg-[#ebe8d7]">
      <div className="flex">
        {arrows.map(([label, d]) => (
          <button key={label} type="button" aria-label={label} className="flex h-4 w-[16px] items-center justify-center">
            <svg width="12" height="12" viewBox="0 0 12 12" aria-hidden="true">
              <path d={d} fill="#000" stroke="#000" />
            </svg>
          </button>
        ))}
      </div>
      <div className="flex h-4 flex-1 items-center border-t border-[#a8a594] pl-[2px] font-['DejaVu_Sans',sans-serif] text-[11px] leading-[15px]">
        <span className="flex items-center bg-white">
          <Slash back />
          <button type="button" className="font-bold">Графики</button>
        </span>
        <Slash />
        {SHEETS.map((s) => (
          <span key={s} className="flex items-center">
            <button type="button" className={clsx("border-b border-[#a8a594]", s.startsWith("H") ? "pl-[7px] pr-2" : "px-1")}>
              {s}
            </button>
            <Slash />
          </span>
        ))}
      </div>
      <div className="mr-[18px] flex h-4 w-[211px] shrink-0 items-center border-l-2 border-r-2 border-black bg-[#f8f8f4]">
        <ScrollButton label="Влево" d="M7 1L3 5l4 4" />
        <div className="flex flex-1 justify-end pr-[44px]">
          <div className="flex h-[14px] w-[44px] items-center justify-center gap-px rounded-[2px] border border-white bg-[#bfd2fb]">
            {[0, 1, 2, 3].map((i) => (
              <span key={i} className="h-[6px] w-px bg-[#8cb0f8]" />
            ))}
          </div>
        </div>
        <ScrollButton label="Вправо" d="M3 1l4 4-4 4" />
        <span className="ml-1" />
      </div>
    </div>
  );
}

function StatusBar() {
  const cell = "h-[15px] border border-[#d0cdbb]";
  return (
    <div className="flex h-[19px] shrink-0 items-center gap-px bg-[#ebe8d7] pl-1 pr-[3px] text-[11px] leading-4">
      <span className="flex-1">Готово</span>
      <span className={clsx(cell, "w-[34px]")} />
      <span className={clsx(cell, "w-[112px]")} />
      <span className={clsx(cell, "w-[26px]")} />
      <span className={clsx(cell, "w-[28px]")} />
      <span className={clsx(cell, "flex w-[28px] items-center justify-center")}>NUM</span>
      <span className={clsx(cell, "w-[28px]")} />
      <span className={clsx(cell, "w-[28px]")} />
      <span className={clsx(cell, "w-[32px]")} />
    </div>
  );
}

/* ---------- taskbar ---------- */

function Task({ icon, active, children }: { icon: ReactNode; active?: boolean; children: ReactNode }) {
  return (
    <button
      type="button"
      className={clsx(
        "flex h-[25px] w-[159px] items-center gap-[3px] rounded-[3px] border pl-[10px] text-[11px] leading-4 text-white",
        active ? "border-[#1640a0] bg-[#1e50b8]" : "border-[#2a62d4] bg-linear-to-b from-[#5a9afa] via-[#3c81f3] via-20% to-[#3577ee]",
      )}
    >
      {icon}
      <span className="truncate">{children}</span>
    </button>
  );
}

function Taskbar() {
  return (
    <footer className="flex h-[30px] shrink-0 items-center bg-linear-to-b from-[#4a92f4] via-[#2459d8] via-15% to-[#2258d6]">
      <button
        type="button"
        className="flex h-full w-[96px] items-center gap-[6px] rounded-r-[10px] bg-linear-to-b from-[#62b062] via-[#3a943a] via-20% to-[#2f8030] pl-[10px] font-['Liberation_Sans',sans-serif] text-[17px] font-bold italic leading-5 text-white shadow-[inset_-3px_0_4px_#1f5f20] [text-shadow:1px_1px_2px_#1b4d1b]"
      >
        <Svg size={18}>
          <path d="M2 3q3-2 5.500 0L6.500 7.500Q4 6 1 7.500z" fill="#f0592a" />
          <path d="M8.500 3.500q3 1.500 6 0L13.500 8q-3 1.500-6 0z" fill="#8cc63e" />
          <path d="M1 8.500q3-1.500 5.500 0L5.500 13Q3 11.500 0 13z" fill="#4d8ef0" />
          <path d="M7.500 9q3 1.500 6 0l-1 4.500q-3 1.500-6 0z" fill="#fbc92d" />
        </Svg>
        пуск
      </button>
      <div className="ml-[13px] flex items-center gap-[7px]">
        <button type="button" aria-label="Chrome"><ChromeIcon /></button>
        <button type="button" aria-label="Opera">
          <Svg>
            <ellipse cx="8" cy="8" rx="7.500" ry="8" fill="#d8181c" />
            <ellipse cx="8" cy="8" rx="3" ry="5.500" fill="#f6e8e8" />
          </Svg>
        </button>
        <button type="button" aria-label="Internet Explorer">
          <Svg>
            <path d="M13 10.500A5.300 5.300 0 1 1 13.300 8H4" stroke="#7cc8fa" strokeWidth="2.400" />
            <path d="M2 14.500C-1 12 8 1 14 1.500q2 1-1 4.500" stroke="#f0c848" strokeWidth="1.300" />
          </Svg>
        </button>
        <button type="button" aria-label="Развернуть" className="-mt-3 ml-[3px] text-[13px] leading-4 text-white">»</button>
      </div>
      <div className="ml-[9px] flex">
        <Task icon={<ChromeIcon />}>Пробеги и экспедиц...</Task>
        <Task
          icon={
            <Svg>
              <path d="M1 13.500v-11h5l1.500 2H14v9z" fill="#f0c040" stroke="#b8862a" />
              <path d="M1 13.500L2.500 6h13L14 13.500z" fill="#fde68a" stroke="#c4942c" />
            </Svg>
          }
        >
          Высотные ВСХ
        </Task>
        <Task active icon={<ExcelIcon size={15} />}>Microsoft Excel - 17 м...</Task>
      </div>
      <span className="ml-auto mr-[12px] text-[11px] leading-4 text-white">EN</span>
      <div className="flex h-full w-[147px] items-center gap-[3px] border-l border-[#0c4cac] bg-linear-to-b from-[#3cb4f8] via-[#1290e8] via-15% to-[#0f8fee] pl-[8px] pr-[13px] text-[11px] leading-4 text-white">
        <Svg>
          <path d="M6.500 1.500h8v6h-8z" fill="#7cc4f4" stroke="#dcecfa" />
          <path d="M1.500 6.500h8v6h-8z" fill="#3a88e0" stroke="#dcecfa" />
          <path d="M3 14.500h6M11 9.500h4" stroke="#dcecfa" />
        </Svg>
        <Svg>
          <path d="M8 7l4-4 2 2-4 8-3 2z" fill="#d8dce2" stroke="#8a8f98" />
          <circle cx="5" cy="5" r="4.200" fill="#d8141c" />
          <path d="M3.500 3.500l3 3M6.500 3.500l-3 3" stroke="#fff" strokeWidth="1.300" />
        </Svg>
        <Svg>
          <path d="M2 1.500h11v8l-5.500 5-5.500-5z" fill="#f4cf68" stroke="#b08828" />
          <path d="M5.500 2v9M9.500 2v9" stroke="#fff" />
          <circle cx="11.500" cy="12" r="3.300" fill="#ffe020" stroke="#a88810" />
          <path d="M11.500 10v2.500M11.500 13v1" stroke="#222" />
        </Svg>
        <Svg>
          <path d="M7 3h9v10H7z" fill="#62b01c" />
          <path d="M0 8q7-8 14 0-7 7-14 0z" stroke="#90e050" strokeWidth="1.400" />
          <circle cx="7.500" cy="8" r="2.200" fill="#d0f4a8" />
        </Svg>
        <Svg>
          <circle cx="6.500" cy="7" r="5.500" fill="#4a4e58" stroke="#c8ccd4" />
          <circle cx="6.500" cy="7" r="2.500" fill="#a8b0bc" />
          <path d="M11 13l3-4M13 15l2.500-4" stroke="#a8d4fa" />
        </Svg>
        <time className="ml-auto">21:39</time>
      </div>
    </footer>
  );
}

export default function App() {
  return (
    <div className="flex h-screen flex-col overflow-hidden font-['DejaVu_Sans_Condensed','DejaVu_Sans',sans-serif] text-black">
      <TitleBar />
      <div className="shrink-0 bg-linear-to-r from-[#a1bff5] to-[#c6dafa] to-60%">
        <MenuBar />
        <Toolbars />
        <div className="flex h-[25px] pl-[2px]">
          <div className={clsx(BAR, "w-[66px]")}>
            <Grip />
            <Tool name="pdf" label="Преобразовать в PDF" />
            <Tool name="pdfMail" label="Преобразовать и отправить" />
            <BarEnd />
          </div>
        </div>
        <FormulaBar />
      </div>
      <main className="flex min-h-0 flex-1 border-t-2 border-[#8c8a7c]">
        <Grid />
        <VerticalScroll />
      </main>
      <SheetTabs />
      <StatusBar />
      <Taskbar />
    </div>
  );
}
